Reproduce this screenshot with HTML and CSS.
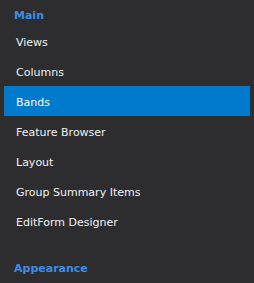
FILE: index.html
```html
<!DOCTYPE html>
<html>
<head>
<meta charset="utf-8">
<link rel="stylesheet" href="styles.css">
</head>
<body>
<nav class="nav">
  <section class="group">
    <div class="group-title">Main</div>
    <div class="item">Views</div>
    <div class="item">Columns</div>
    <div class="item selected">Bands</div>
    <div class="item">Feature Browser</div>
    <div class="item">Layout</div>
    <div class="item">Group Summary Items</div>
    <div class="item">EditForm Designer</div>
  </section>
  <section class="group">
    <div class="group-title">Appearance</div>
  </section>
</nav>
</body>
</html>
```
FILE: styles.css
```css
html, body {
  margin: 0;
  padding: 0;
  background: #2d2d30;
  height: 100%;
  overflow: hidden;
}
body {
  font-family: "DejaVu Sans", Verdana, sans-serif;
  font-size: 11px;
  color: #f1f1f1;
}
.nav {
  display: flex;
  flex-direction: column;
  padding: 0 4px;
}
.group {
  display: flex;
  flex-direction: column;
  margin-bottom: 17px;
}
.group-title {
  padding: 6px 0 0 10px;
  line-height: 20px;
  font-weight: bold;
  color: #3b8eea;
}
.item {
  padding: 3px 0 0 12px;
  line-height: 27px;
  white-space: nowrap;
}
.item.selected {
  background: #007acc;
  color: #ffffff;
}
```
